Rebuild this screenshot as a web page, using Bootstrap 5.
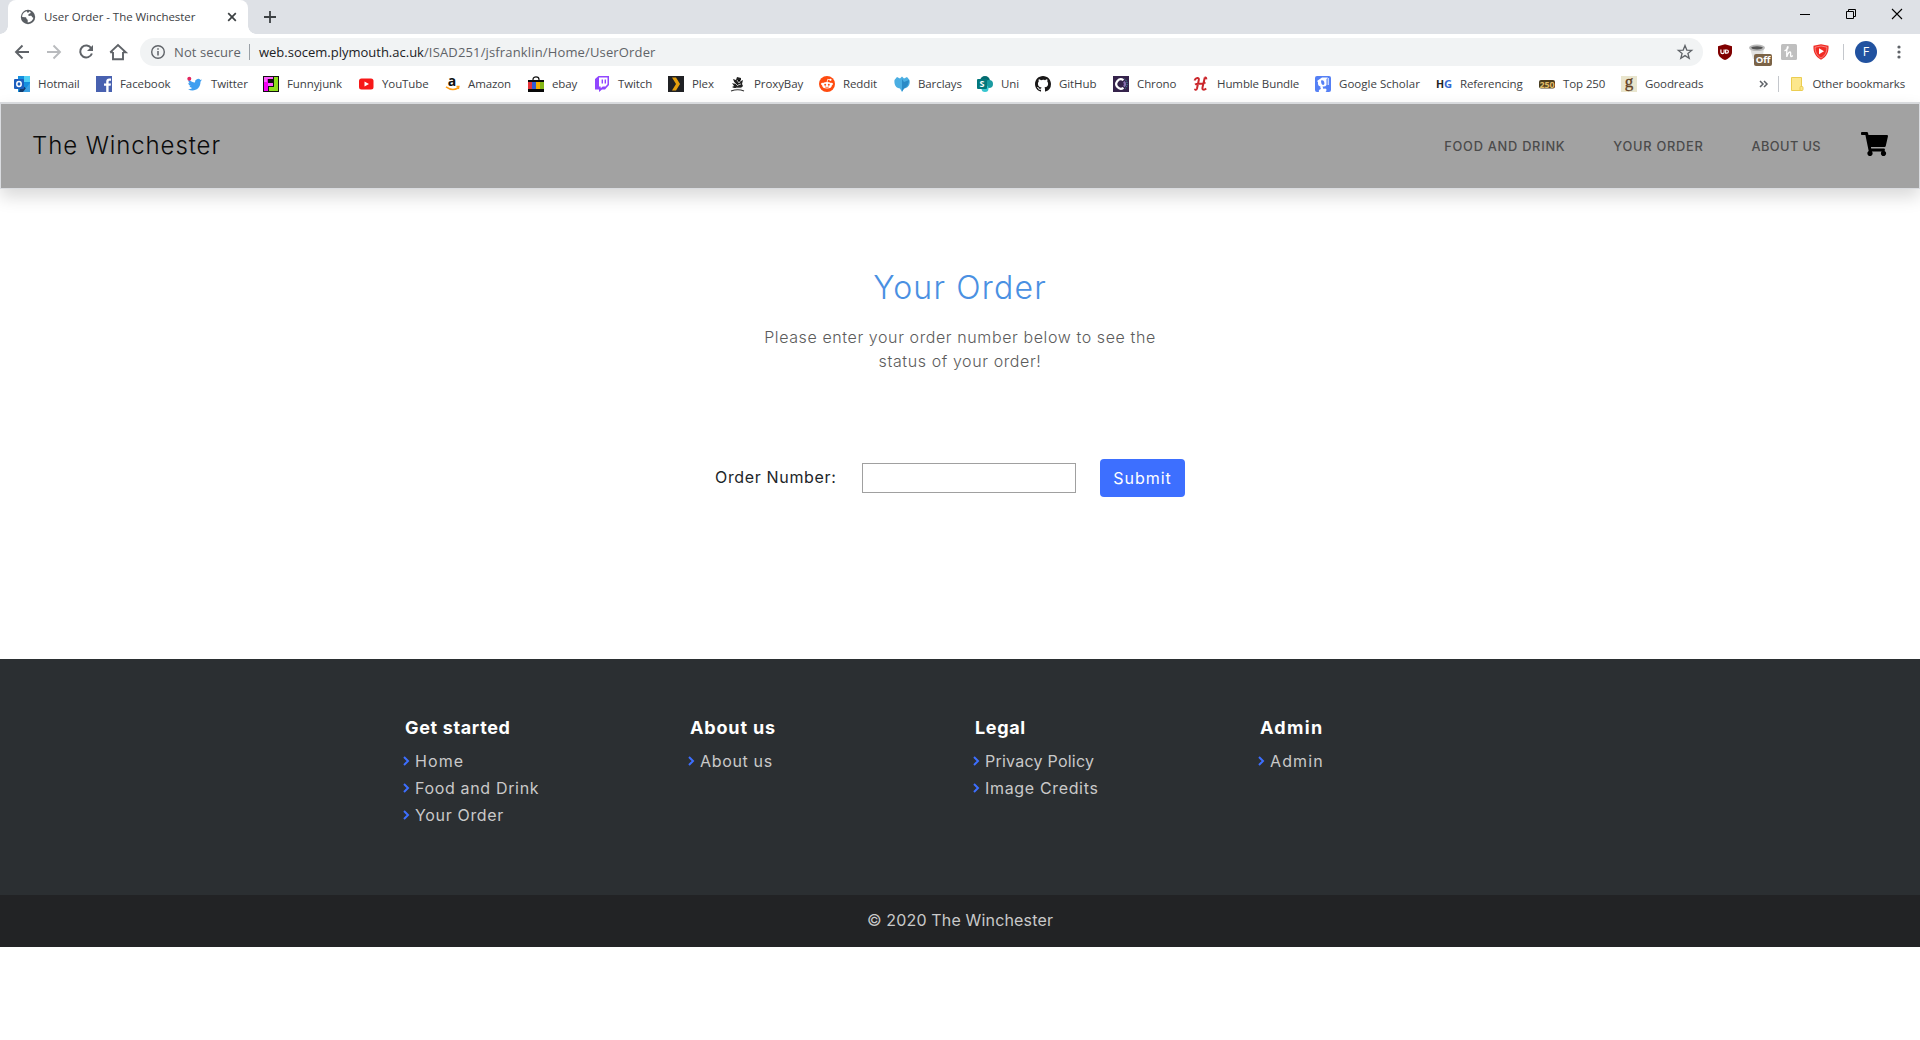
<!DOCTYPE html>
<html lang="en">
<head>
<meta charset="utf-8">
<title>User Order - The Winchester</title>
<link href="https://cdn.jsdelivr.net/npm/bootstrap@5.3.0/dist/css/bootstrap.min.css" rel="stylesheet">
<style>
body{font-family:Inter,"Open Sans",sans-serif;font-size:16px;letter-spacing:.66px;line-height:24px;color:#212529}
svg{display:block;flex:none;overflow:visible}
.chrome-ui{font-family:"Open Sans","Noto Sans",sans-serif;font-size:11.5px;letter-spacing:-.1px;color:#3c4043;line-height:16px;white-space:nowrap}
.tabstrip{height:34px;background:#dee1e6}
.tab-item{width:240px;height:34px;margin-left:8px;padding:0 11px 0 12px;border-radius:8px 8px 0 0;background:#fff;position:relative}
.tab-item::before,.tab-item::after{content:"";position:absolute;bottom:0;width:8px;height:8px}
.tab-item::before{left:-8px;background:radial-gradient(circle at 0 0,#dee1e6 7.5px,#fff 8px)}
.tab-item::after{right:-8px;background:radial-gradient(circle at 100% 0,#dee1e6 7.5px,#fff 8px)}
.win-buttons{gap:36px;padding:9px 18px 0 0}
.toolbar{height:36px}
.nav-buttons{width:112px;margin:0 13px 0 15px}
.omnibox{width:1563px;height:28px;border-radius:14px;background:#f1f3f4;padding:0 10px 0 11px;font-size:13px;letter-spacing:0;color:#5f6368}
.omni-sep{width:1px;height:16px;background:#9aa0a6}
.bookmarks{height:32px;padding:0 15px 4px 14px}
.bm-list{display:grid;grid-template-columns:82px 91px 76px 95px 87px 83px 66px 74px 62px 89px 75px 83px 58px 78px 80px 122px 121px 103px 82px 90px}
.bm-list>div{display:flex;align-items:center;gap:8px}
.ui-sep{width:1px;height:16px;background:#c4c7cc}
.off-tag{position:absolute;left:5px;top:10px;width:18px;height:12px;border-radius:2px;background:#7b6347;color:#fff;font-size:9.5px;font-weight:700;line-height:12px;text-align:center}
.site-head{height:87px;background:#a2a2a2;border:1px solid #dadce0;border-top:2px solid #d8dadd;box-shadow:0 8px 16px rgba(0,0,0,.15);padding:0 31px}
.site-name{font-size:24px;font-weight:300;letter-spacing:.9px;color:#0b0b0b}
.site-nav{gap:48px;padding-top:2px;font-size:12.8px;font-weight:500;letter-spacing:.74px;color:#4b4b4b}
.order-main{height:470px;padding-top:80px}
.order-title{font-size:32px;font-weight:300;letter-spacing:1.2px;line-height:38px;color:#4a90e2;margin-bottom:18px}
.order-text{width:400px;font-weight:300;letter-spacing:.6px;color:#5c5c5c;margin-bottom:86px}
.order-form{padding-left:715px}
.order-input{width:214px;height:30px;border:1px solid #a0a0a0;background:#fff}
.order-btn,.order-btn:hover{width:85px;height:38px;margin-left:24px;background:#3d6fff;color:#fff;border-radius:4px;padding:0;letter-spacing:1px}
.foot-main{height:236px;background:#2b2f32;padding-top:57px}
.foot-wrap{width:1140px;margin:0 auto}
.foot-wrap .col-3{padding:0 15px}
.foot-main h5{font-size:18px;font-weight:700;letter-spacing:.65px;line-height:24px;color:#fff;margin:0 0 7px}
.foot-main li{height:27px;display:flex;align-items:center;gap:6px;margin-left:-2px;color:#c9c9c9}
.foot-copy{height:52px;padding-bottom:2px;background:#222325;color:#c9c9c9;letter-spacing:.16px}
.tight{letter-spacing:.24px}
.loose{letter-spacing:1.1px}
</style>
</head>
<body class="bg-white">
<div class="chrome-ui">
  <div class="tabstrip d-flex">
    <div class="tab-item d-flex align-items-center">
      <svg width="16" height="16" viewBox="0 0 16 16" class="me-2"><circle cx="8" cy="8" r="7.2" fill="#5a5e63"/><path d="M7 2.2C4 2.6 2 5.200 2.200 8l3 .2c1 0 1.300.6 1.300 1.400 0 .8.7 1 1.200 1.200v2.800c3-.3 5.200-2.200 5.700-4.800-1-.2-1.400-.8-1.700-1.500-.4-.8-1.500-.4-2.500-.4-1.200 0-1.200-2 0-2.200 1 0 1.500-.6 1.500-1.400L9.500 2.300 8.800 3.600H7z" fill="#fff"/></svg>
      <span class="me-auto" style="letter-spacing:-.05px">User Order - The Winchester</span>
      <svg width="10" height="10" viewBox="0 0 10 10"><path d="M1.200 1.200l7.600 7.600M8.800 1.200L1.200 8.800" stroke="#3c4043" stroke-width="1.700"/></svg>
    </div>
    <div class="d-flex align-items-center ps-3"><svg width="12" height="12" viewBox="0 0 12 12"><path d="M6 0v12M0 6h12" stroke="#3c4043" stroke-width="1.800"/></svg></div>
    <div class="win-buttons ms-auto d-flex">
      <svg width="10" height="10"><path d="M0 5.500h10" stroke="#000"/></svg>
      <svg width="10" height="10"><path d="M.5 2.500h7v7h-7zM2.500 2.500v-2h7v7h-2" fill="none" stroke="#000"/></svg>
      <svg width="10" height="10"><path d="M0 0l10 10M10 0L0 10" stroke="#000" stroke-width="1.100"/></svg>
    </div>
  </div>
  <div class="toolbar d-flex align-items-center">
    <div class="nav-buttons d-flex align-items-center justify-content-between"><svg width="16" height="16" viewBox="0 0 16 16"><path d="M14 8H1.500M7.500 1.500L1 8 7.500 14.500" fill="none" stroke="#5f6368" stroke-width="1.900"/></svg>
      <svg width="16" height="16" viewBox="0 0 16 16"><path d="M1 8h12.500M7.500 1.500L14 8 7.500 14.500" fill="none" stroke="#b9bbbe" stroke-width="1.900"/></svg>
      <svg width="16" height="16" viewBox="0 0 16 16"><path d="M13.300 4.300A6 6 0 1 0 13.900 9.500" fill="none" stroke="#5f6368" stroke-width="2"/><path d="M15 1v6H9z" fill="#5f6368"/></svg>
      <svg width="18" height="18" viewBox="0 0 18 18"><path d="M4 9v7.200h10V9M1.200 9.400L9 2l7.800 7.400H14M4 9.400H1.200" fill="none" stroke="#5f6368" stroke-width="1.900"/></svg></div>
    <div class="omnibox d-flex align-items-center">
      <svg width="14" height="14" viewBox="0 0 14 14" class="me-2"><circle cx="7" cy="7" r="6.300" fill="none" stroke="#5f6368" stroke-width="1.400"/><path d="M7 6v4.500M7 3.200v1.600" stroke="#5f6368" stroke-width="1.500"/></svg>
      <span class="me-2" style="letter-spacing:.1px;margin-left:1px">Not secure</span>
      <span class="omni-sep"></span>
      <span style="margin-left:9px;color:#202124">web.socem.plymouth.ac.uk</span><span style="letter-spacing:.15px">/ISAD251/jsfranklin/Home/UserOrder</span>
      <svg width="16" height="16" viewBox="0 0 16 16" class="ms-auto"><path d="M8 1.500l1.800 4.600 4.900.3-3.800 3.100 1.300 4.800L8 11.600l-4.200 2.700 1.300-4.800L1.300 6.400l4.900-.3z" fill="none" stroke="#5f6368" stroke-width="1.300"/></svg>
    </div>
    <svg width="16" height="16" viewBox="0 0 16 16" style="margin-left:14px"><path d="M8 .2L15 2.300V8c0 4-3 6.500-7 8-4-1.500-7-4-7-8V2.300z" fill="#800000"/><path d="M3.900 5.500v2.800q0 1.300 1.600 1.300t1.600-1.300V5.500" fill="none" stroke="#fff" stroke-width="1.200"/><path d="M8.600 6h1.200a1.600 1.600 0 0 1 0 3.200H8.600z" fill="none" stroke="#fff" stroke-width="1.200"/></svg>
    <div class="position-relative" style="margin-left:16px;width:16px;height:16px"><svg width="17" height="16"><path d="M1 4h14l-1.500 11H4z" fill="#e2e2e2"/><ellipse cx="8" cy="3.800" rx="8" ry="3.300" fill="#b9b9b9"/><ellipse cx="8" cy="3.800" rx="5.800" ry="1.600" fill="#555"/></svg><span class="off-tag">Off</span></div>
    <svg width="16" height="16" viewBox="0 0 16 16" style="margin-left:16px"><rect width="16" height="16" rx="1.500" fill="#bfbfbf"/><path d="M3.500 6.800C5.500 6 7.600 4.200 7 2.800 6.300 2 5.600 4 5.800 13c.7-4 3.600-6.500 3.900-4 0 1-.5 3 .3 3.700.7.100 1.200-.5 1.700-1.200" fill="none" stroke="#fff" stroke-width="1.300"/></svg>
    <svg width="16" height="16" viewBox="0 0 16 16" style="margin-left:16px"><path d="M8 .3l7.500 1.500C16 8 13.500 13 8 15.700 2.500 13 0 8 .5 1.800z" fill="#f12b24"/><path d="M8 2l5.900 1.200C14 8 12 12 8 14 4 12 2 8 2.100 3.200z" fill="none" stroke="#fff" stroke-width=".5" opacity=".8"/><path d="M6 4.200v6l5-3z" fill="#fff"/></svg>
    <span class="ui-sep" style="margin-left:14px"></span>
    <svg width="22" height="22" style="margin-left:11px"><circle cx="11" cy="11" r="11" fill="#2152a0"/><text x="11" y="15.300" font-size="12.500" fill="#fff" text-anchor="middle" font-family="Open Sans">F</text></svg>
    <svg width="4" height="14" style="margin-left:20px"><g fill="#5f6368"><circle cx="2" cy="2" r="1.600"/><circle cx="2" cy="7" r="1.600"/><circle cx="2" cy="12" r="1.600"/></g></svg>
  </div>
  <div class="bookmarks d-flex align-items-center">
    <div class="bm-list">
      <div><svg width="16" height="16"><path d="M4 0h12v16H4z" fill="#1490df"/><path d="M10 0h6v6h-6z" fill="#50d0f5"/><path d="M7 8l9 8H5z" fill="#123b6d"/><path d="M16 7v9H9z" fill="#39a0e4"/><rect y="3" width="10" height="10" rx="1" fill="#1b5ebe"/><ellipse cx="5" cy="8" rx="2.200" ry="2.500" fill="none" stroke="#fff" stroke-width="1.500"/></svg>Hotmail</div>
      <div><svg width="16" height="16"><rect width="16" height="16" fill="#4861b0"/><path d="M10.200 16V9.800H8V7.400h2.200V5.600c0-2.200 1.200-3.100 3-3.100H15v2.200h-1.200c-.9 0-1.200.4-1.200 1.200v1.500H15l-.4 2.400h-2V16z" fill="#fff"/></svg>Facebook</div>
      <div><svg width="16" height="16"><path d="M15 3.600l-1.500.5A3.100 3.100 0 0 0 8 6.500C5.400 6.400 3.200 5 1.800 3.300c-.8 1.500-.3 3.100 1 4L1.300 7c.1 1.600 1 2.600 2.500 3H2.500c.5 1.200 1.500 1.800 2.800 2-1.200.9-2.700 1.300-4.300 1.200 5.500 3 12.500.2 12.500-7.500z" fill="#3f9ff0"/><circle cx="2.300" cy="2.800" r="2" fill="#e3265e"/></svg>Twitter</div>
      <div><svg width="16" height="16" shape-rendering="crispEdges"><path fill="#111" d="M0 0h16v16H0z"/><path fill="#f400f4" d="M1 1h4v14H1z"/><path fill="#ff5cff" d="M1 1h9v2H4v3H1zM5 7h5v3H5z"/><path fill="#8fe01d" d="M11 1h4v14H6v-4h5z"/></svg>Funnyjunk</div>
      <div><svg width="16" height="16"><rect x="1" y="2.500" width="14.500" height="11" rx="2.500" fill="#f71818"/><path d="M6.500 5.500v5L11 8z" fill="#fff"/></svg>YouTube</div>
      <div style="gap:7px"><svg width="16" height="16"><text x="7" y="10" font-size="14" font-weight="700" font-family="Open Sans" text-anchor="middle" fill="#111">a</text><path d="M1 10.800q6 4.500 12 1.200M11.500 10.500h2.300l-.5 2.500" fill="none" stroke="#ff9d14" stroke-width="1.500"/></svg>Amazon</div>
      <div><svg width="16" height="16"><path d="M5 5V3.500C5 0 11 0 11 3.500V5" fill="none" stroke="#111" stroke-width="1.200"/><path fill="#080808" d="M0 4h16v12H0z"/><path fill="#e53238" d="M0 6h4v7H0z"/><path fill="#315bd2" d="M4 6h4v7H4z"/><path fill="#f4af02" d="M8 6h4v7H8z"/><path fill="#85b716" d="M12 6h4v7h-4z"/></svg>ebay</div>
      <div><svg width="16" height="16"><path d="M4.500 0H15v9l-4 4.500H8L5 16v-2.500H1V3z" fill="#9146ff"/><path d="M5 1.500h8.500v6.700l-2 2.300H8.700l-2 1.700v-1.700H5z" fill="#fff"/><path d="M8.300 3.500v4M11.300 3.500v4" stroke="#9146ff" stroke-width="1.400"/></svg>Twitch</div>
      <div><svg width="16" height="16"><path fill="#202124" d="M0 0h16v16H0z"/><path fill="#e5a00d" d="M4 1.500h4L12 8l-4 6.500H4L8 8z"/></svg>Plex</div>
      <div><svg width="16" height="16"><path d="M3 3l3 1 1-3 4 1v3l2-1-1 4 1 2-2 2H4L2 11l2-1-2-3 3 1z" fill="#222"/><path d="M7 4l2 3 2-3M4 6l4 4M8 9l3-1M6 12h6" stroke="#ddd" stroke-width=".8"/><path d="M1 15q7-2.500 13 0" fill="none" stroke="#333" stroke-width="1.200"/></svg>ProxyBay</div>
      <div><svg width="16" height="16"><circle cx="8" cy="8" r="8" fill="#ff4b0f"/><ellipse cx="8" cy="9.300" rx="4.800" ry="3.300" fill="#fff"/><circle cx="3.300" cy="8" r="1.200" fill="#fff"/><circle cx="12.700" cy="8" r="1.200" fill="#fff"/><circle cx="11.500" cy="3.800" r="1.100" fill="#fff"/><path d="M8 6.500l.7-3.200 2.500.5" fill="none" stroke="#fff" stroke-width=".8"/><circle cx="6.200" cy="8.700" r="1" fill="#ff4b0f"/><circle cx="9.800" cy="8.700" r="1" fill="#ff4b0f"/><path d="M6 10.900q2 1.200 4 0" fill="none" stroke="#ff4b0f" stroke-width=".7"/></svg>Reddit</div>
      <div><svg width="16" height="16"><path d="M3 1l3 1.500L8 .5l2 2L13 1l2.500 3c1 4-1 7-3.500 8l-2 .5-2 3.500-2-3.500-2-.5C1.500 11 0 8 .5 4z" fill="#4aaee2"/><path d="M8 3l2 3 5-2q0 5-4 8l-1 .5-2 3z" fill="#2a8ac6"/></svg>Barclays</div>
      <div><svg width="16" height="16"><circle cx="8" cy="5" r="5" fill="#036c70"/><circle cx="12" cy="8" r="4" fill="#1a9ba1"/><circle cx="8" cy="12.500" r="3.500" fill="#37c6d0"/><rect y="3" width="10" height="10" rx="1" fill="#03787c"/><text x="5" y="11.300" font-size="9" font-weight="700" font-family="Open Sans" fill="#fff" text-anchor="middle">S</text></svg>Uni</div>
      <div><svg width="16" height="16"><path fill="#191717" d="M8 0C3.580 0 0 3.580 0 8c0 3.540 2.290 6.530 5.470 7.590.4.070.55-.17.550-.38v-1.490c-2.010.37-2.530-.49-2.690-.94-.09-.23-.48-.94-.82-1.130-.28-.15-.68-.52-.01-.53.63-.01 1.080.58 1.230.82.72 1.210 1.870.87 2.330.66.07-.52.280-.87.510-1.070-1.780-.2-3.640-.89-3.640-3.950 0-.87.310-1.590.82-2.150-.08-.2-.36-1.020.08-2.120 0 0 .67-.21 2.200.82A7.700 7.700 0 0 1 8 3.860c.68 0 1.360.09 2 .27 1.530-1.040 2.200-.82 2.200-.82.44 1.100.16 1.920.08 2.120.51.56.82 1.270.82 2.150 0 3.070-1.870 3.750-3.650 3.950.29.25.54.73.54 1.480v2.200c0 .21.150.46.550.38A8 8 0 0 0 16 8c0-4.420-3.580-8-8-8z"/></svg>GitHub</div>
      <div><svg width="16" height="16"><path fill="#35234b" d="M0 0h16v16H0z"/><path d="M10.500 4.200a4.600 4.600 0 1 0 0 7.600" fill="none" stroke="#fff" stroke-width="2.200"/><path d="M11 5.500a4 4 0 0 1 0 5" fill="none" stroke="#8771b2" stroke-width="2"/><path d="M11.500 3a6 6 0 0 1 0 10" fill="none" stroke="#48afc0" stroke-dasharray="1 1"/></svg>Chrono</div>
      <div><svg width="16" height="16"><path d="M1.500 4.500C2.500 1.500 6.500.8 5.800 4L4 12.500c-.5 1.700-2 1.500-2 .3M11.800 1.500L9.500 11.500c-.5 2.500 1.700 2.800 3.700 1M2 8.500C5 6.500 8.500 9 12.500 6.500M11.800 1.500q1.800-.4 1.400 1.800" fill="none" stroke="#cb272c" stroke-width="2"/></svg>Humble Bundle</div>
      <div style="letter-spacing:.02px"><svg width="16" height="16"><rect width="16" height="16" rx="2" fill="#5580f5"/><path d="M2 5l5-3.500h6L11.500 3v6q-1 2-4 1.500l1 2.500q2-1 3 .5 0 2-1 2.500H4q-1-2 2-3-1-1.500-.5-2.500Q2.500 10 3 6z" fill="#fff"/><path d="M6 4.500q2.500-1 3.200 1.500t-.7 3Q6 9 6 4.500z" fill="#5580f5"/><path d="M13.200 2v7M7 14.500h3" stroke="#fff"/></svg>Google Scholar</div>
      <div><svg width="16" height="16"><text x="0" y="12" font-size="10.500" font-weight="700" font-family="Open Sans" textLength="8" lengthAdjust="spacingAndGlyphs" fill="#222">H</text><text x="8" y="12" font-size="10.500" font-weight="700" font-family="Open Sans" textLength="8" lengthAdjust="spacingAndGlyphs" fill="#3468d0">G</text></svg>Referencing</div>
      <div><svg width="16" height="16"><rect y="4" width="16" height="8.500" rx="2" fill="#4a3b1c"/><text x="8" y="11.700" font-size="9.500" font-weight="700" font-family="Open Sans" textLength="15" lengthAdjust="spacingAndGlyphs" text-anchor="middle" fill="#e0bb68">250</text></svg>Top 250</div>
      <div><svg width="16" height="16"><path fill="#e9e5cd" d="M0 0h16v16H0z"/><text x="8" y="11" font-size="17" font-family="Liberation Serif" text-anchor="middle" fill="#62401f" stroke="#62401f" stroke-width=".3">g</text></svg>Goodreads</div>
    </div>
    <svg width="9" height="8" style="margin-left:48px"><path d="M1 1l3 3-3 3M5 1l3 3-3 3" fill="none" stroke="#5f6368" stroke-width="1.500"/></svg>
    <span class="ui-sep" style="margin-left:10px"></span>
    <svg width="14" height="16" style="margin:0 9px 0 11px"><path d="M1.500 1.500h10v13h-10z" fill="#fce78d" stroke="#ebcd51"/><rect x="10" y="10.500" width="3" height="4" rx="1" fill="#fce78d" stroke="#ebcd51"/></svg>
    <span style="letter-spacing:-.13px">Other bookmarks</span>
  </div>
</div>

<header class="site-head d-flex align-items-center">
  <span class="site-name me-auto">The Winchester</span>
  <nav class="site-nav d-flex align-items-center"><span>FOOD AND DRINK</span><span>YOUR ORDER</span><span style="letter-spacing:.4px">ABOUT US</span></nav>
  <svg width="27" height="24" viewBox="0 0 576 512" style="margin-left:40px;margin-top:-4px"><path d="M528.120 301.319l47.273-208C578.806 78.301 567.391 64 551.990 64H159.208l-9.166-44.810C147.758 8.021 137.930 0 126.529 0H24C10.745 0 0 10.745 0 24v16c0 13.255 10.745 24 24 24h69.883l70.248 343.435C147.325 417.100 136 435.222 136 456c0 30.928 25.072 56 56 56s56-25.072 56-56c0-15.674-6.447-29.835-16.824-40h209.647C430.447 426.165 424 440.326 424 456c0 30.928 25.072 56 56 56s56-25.072 56-56c0-22.172-12.888-41.332-31.579-50.405l5.517-24.276c3.413-15.018-8.002-29.319-23.403-29.319H218.117l-6.545-32h293.145c11.206 0 20.920-7.754 23.403-18.681z"/></svg>
</header>

<main class="order-main">
  <h2 class="order-title text-center">Your Order</h2>
  <p class="order-text mx-auto text-center">Please enter your order number below to see the status of your order!</p>
  <form class="order-form d-flex align-items-center">
    <label style="width:147px;margin-top:-3px">Order Number:</label>
    <input class="order-input" type="text" aria-label="Order Number">
    <button class="btn order-btn" type="button">Submit</button>
  </form>
</main>

<footer>
  <div class="foot-main">
    <div class="foot-wrap row g-0">
      <div class="col-3"><h5>Get started</h5>
        <ul class="list-unstyled m-0"><li><svg width="6" height="10"><path d="M1 1l4 4-4 4" fill="none" stroke="#3d6fff" stroke-width="2"/></svg><span class="loose">Home</span></li><li><svg width="6" height="10"><path d="M1 1l4 4-4 4" fill="none" stroke="#3d6fff" stroke-width="2"/></svg>Food and Drink</li><li><svg width="6" height="10"><path d="M1 1l4 4-4 4" fill="none" stroke="#3d6fff" stroke-width="2"/></svg>Your Order</li></ul></div>
      <div class="col-3"><h5 style="letter-spacing:.85px">About us</h5>
        <ul class="list-unstyled m-0"><li><svg width="6" height="10"><path d="M1 1l4 4-4 4" fill="none" stroke="#3d6fff" stroke-width="2"/></svg>About us</li></ul></div>
      <div class="col-3"><h5>Legal</h5>
        <ul class="list-unstyled m-0"><li><svg width="6" height="10"><path d="M1 1l4 4-4 4" fill="none" stroke="#3d6fff" stroke-width="2"/></svg><span class="tight">Privacy Policy</span></li><li><svg width="6" height="10"><path d="M1 1l4 4-4 4" fill="none" stroke="#3d6fff" stroke-width="2"/></svg>Image Credits</li></ul></div>
      <div class="col-3"><h5 style="letter-spacing:1.3px">Admin</h5>
        <ul class="list-unstyled m-0"><li><svg width="6" height="10"><path d="M1 1l4 4-4 4" fill="none" stroke="#3d6fff" stroke-width="2"/></svg><span class="loose">Admin</span></li></ul></div>
    </div>
  </div>
  <div class="foot-copy d-flex align-items-center justify-content-center">© 2020 The Winchester</div>
</footer>
<script src="https://cdn.jsdelivr.net/npm/bootstrap@5.3.0/dist/js/bootstrap.bundle.min.js"></script>
</body>
</html>
